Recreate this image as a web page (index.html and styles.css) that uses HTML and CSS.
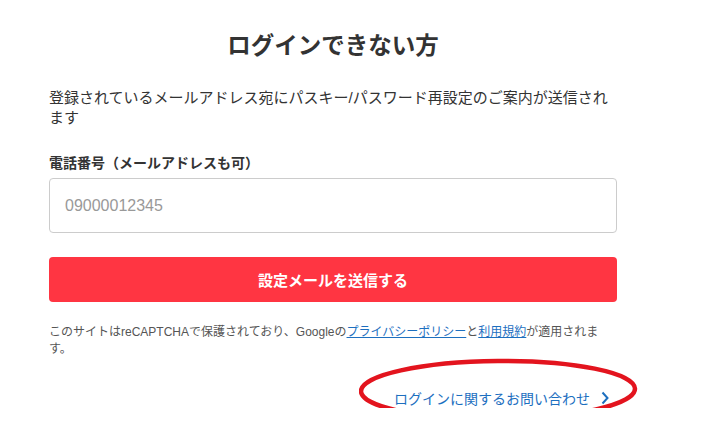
FILE: index.html
```html
<!DOCTYPE html>
<html lang="ja">
<head>
  <meta charset="utf-8">
  <title>ログインできない方</title>
  <link rel="stylesheet" href="styles.css">
</head>
<body>
  <div class="container">
    <h1 class="title">ログインできない方</h1>
    <p class="lead">登録されているメールアドレス宛にパスキー/パスワード再設定のご案内が送信されます</p>

    <div class="field-group">
      <label for="account">電話番号（メールアドレスも可）</label>
      <input type="text" id="account" placeholder="09000012345">
    </div>

    <button class="primary">設定メールを送信する</button>

    <p class="notice">このサイトはreCAPTCHAで保護されており、Googleの<a href="#">プライバシーポリシー</a>と<a href="#">利用規約</a>が適用されます。</p>

    <div class="contact">
      <div class="contact-box">
        <a href="#" class="contact-link">ログインに関するお問い合わせ
          <svg class="chevron" width="10" height="14" viewBox="0 0 10 14"><path d="M2.5 1.5 L7.5 7 L2.5 12.5" fill="none" stroke="currentColor" stroke-width="2"/></svg>
        </a>
        <svg class="mark" width="290" height="70" viewBox="0 0 290 70"><ellipse cx="139" cy="35" rx="137" ry="29" fill="none" stroke="#e3141e" stroke-width="4.5" transform="rotate(-0.5 139 35)"/></svg>
      </div>
    </div>
  </div>
</body>
</html>
```

FILE: styles.css
```css
:root {
  --text: #333333;
  --muted: #999999;
  --border: #cccccc;
  --accent: #ff3542;
  --link: #1d6fbf;
  --font: "Liberation Sans", "Noto Sans CJK JP", sans-serif;
  --font-ja: "Noto Sans CJK JP", sans-serif;
}

* {
  margin: 0;
  padding: 0;
  box-sizing: border-box;
}

body {
  font-family: var(--font);
  color: var(--text);
  background: #ffffff;
}

.container {
  width: 568px;
  margin-left: 49px;
  padding-top: 30px;
}

.title {
  font-size: 23.5px;
  font-weight: 700;
  text-align: center;
  line-height: 32px;
}

.lead {
  margin-top: 26px;
  font-size: 15px;
  line-height: 20px;
}

.field-group {
  margin-top: 25px;
}

label {
  display: block;
  font-size: 14px;
  font-weight: 700;
  line-height: 20px;
  margin-bottom: 5px;
}

input {
  width: 100%;
  height: 55px;
  padding: 0 15px;
  font-family: var(--font);
  font-size: 16px;
  color: var(--text);
  border: 1px solid var(--border);
  border-radius: 4px;
}

input::placeholder {
  color: var(--muted);
}

button.primary {
  display: block;
  width: 100%;
  height: 45px;
  margin-top: 24px;
  background: var(--accent);
  color: #ffffff;
  font-family: var(--font);
  font-size: 15px;
  font-weight: 700;
  border: none;
  border-radius: 4px;
}

.notice {
  margin-top: 22px;
  font-size: 12px;
  line-height: 17px;
  color: #555555;
}

.notice a {
  color: var(--link);
}

.contact {
  display: flex;
  justify-content: flex-end;
  margin-top: 30px;
  padding-right: 7px;
}

.contact-box {
  position: relative;
}

.contact-link {
  display: flex;
  align-items: center;
  gap: 10px;
  height: 20px;
  font-family: var(--font-ja);
  font-size: 14px;
  line-height: 20px;
  color: var(--link);
  text-decoration: none;
}

.mark {
  position: absolute;
  left: -35px;
  top: 50%;
  margin-top: -43px;
}
```
